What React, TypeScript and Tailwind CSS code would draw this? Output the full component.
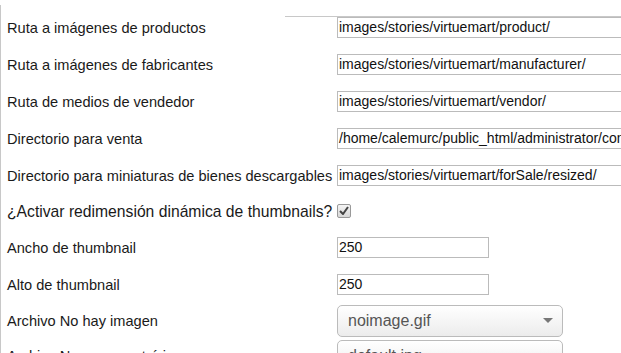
import React from "react";

const font = { fontFamily: '"Liberation Sans", Arial, sans-serif' };

function TextRow({ label, value, h = "h-[37px]", w = "w-[300px]" }: { label: string; value: string; h?: string; w?: string }) {
  return (
    <div className={`flex items-center ${h}`}>
      <div className="w-[330px] shrink-0 text-[14.6px] leading-[16px] text-[#1a1a1a] whitespace-nowrap">{label}</div>
      <div className={`${w} shrink-0 h-[21px] border border-[#bbb] bg-white text-[14px] leading-[19px] text-[#111] pl-px whitespace-nowrap overflow-hidden`}>
        {value}
      </div>
    </div>
  );
}

function SelectRow({ label, value, h = "h-[35px]" }: { label: string; value: string; h?: string }) {
  return (
    <div className={`flex items-center ${h}`}>
      <div className="w-[330px] shrink-0 text-[14.6px] leading-[16px] text-[#1a1a1a] whitespace-nowrap">{label}</div>
      <div className="w-[226px] shrink-0 h-[32px] border border-[#bbb] rounded-[5px] bg-gradient-to-b from-white to-[#ececec] flex items-center justify-between pl-[10px] pr-[9px]">
        <span className="text-[16px] leading-[18px] text-[#555]">{value}</span>
        <svg width="10" height="6" viewBox="0 0 10 6">
          <path d="M0 0 L10 0 L5 5 Z" fill="#777" />
        </svg>
      </div>
    </div>
  );
}

export default function App() {
  return (
    <div className="w-[621px] h-[353px] overflow-hidden bg-white relative" style={font}>
      <div className="absolute left-0 top-[5px] bottom-0 w-px bg-[#c8c8c8]" />
      <div className="absolute left-[285px] right-0 top-[16px] h-px bg-[#c8c8c8]" />
      <div className="pl-[7px] pt-[9px] flex flex-col">
        <TextRow label="Ruta a imágenes de productos" value="images/stories/virtuemart/product/" />
        <TextRow label="Ruta a imágenes de fabricantes" value="images/stories/virtuemart/manufacturer/" />
        <TextRow label="Ruta de medios de vendedor" value="images/stories/virtuemart/vendor/" />
        <TextRow label="Directorio para venta" value="/home/calemurc/public_html/administrator/components/com_virtuemart/" />
        <TextRow label="Directorio para miniaturas de bienes descargables" value="images/stories/virtuemart/forSale/resized/" />
        <div className="flex items-center h-[35px]">
          <div className="shrink-0 text-[15.7px] leading-[18px] text-[#1a1a1a] whitespace-nowrap w-[330px]">¿Activar redimensión dinámica de thumbnails?</div>
          <span className="w-[14px] h-[14px] border border-[#999] rounded-[2px] bg-gradient-to-b from-[#f4f4f4] to-[#d8d8d8] flex items-center justify-center -mt-[2px]">
            <svg width="10" height="9" viewBox="0 0 10 9">
              <path d="M1 5 L4 8 L9 1" stroke="#444" strokeWidth="2" fill="none" />
            </svg>
          </span>
        </div>
        <TextRow label="Ancho de thumbnail" value="250" w="w-[152px]" />
        <TextRow label="Alto de thumbnail" value="250" w="w-[152px]" />
        <SelectRow label="Archivo No hay imagen" value="noimage.gif" />
        <SelectRow label="Archivo No se encontró imagen" value="default.jpg" />
      </div>
    </div>
  );
}
